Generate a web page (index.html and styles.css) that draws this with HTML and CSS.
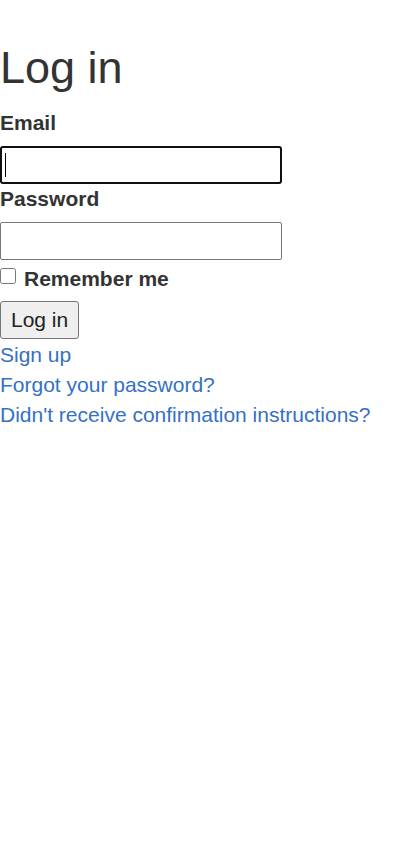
FILE: index.html
```html
<!DOCTYPE html>
<html lang="en">
<head>
<meta charset="utf-8">
<title>Log in</title>
<link rel="stylesheet" href="styles.css">
</head>
<body>
<main class="page">
  <h1 class="title">Log in</h1>
  <form class="form">
    <div class="field">
      <label class="label" for="email">Email</label>
      <span class="input-wrap is-focused"><input class="input input-focused" id="email" type="email"></span>
    </div>
    <div class="field">
      <label class="label" for="password">Password</label>
      <span class="input-wrap"><input class="input" id="password" type="password"></span>
    </div>
    <div class="remember">
      <input class="check" id="remember" type="checkbox">
      <label class="label-inline" for="remember">Remember me</label>
    </div>
    <div class="actions">
      <button class="btn" type="button">Log in</button>
    </div>
  </form>
  <nav class="links">
    <a class="link" href="#">Sign up</a>
    <a class="link" href="#">Forgot your password?</a>
    <a class="link" href="#">Didn't receive confirmation instructions?</a>
  </nav>
</main>
</body>
</html>
```
FILE: styles.css
```css
html, body {
  margin: 0;
  padding: 0;
  background: #fff;
}
body {
  font-family: "Liberation Sans", Arial, sans-serif;
  font-size: 21px;
  line-height: 30px;
  color: #333;
}
.page {
  display: flex;
  flex-direction: column;
}
.title {
  font-size: 45px;
  font-weight: 400;
  line-height: 49px;
  margin: 43px 0 16px;
}
.form {
  display: flex;
  flex-direction: column;
}
.field {
  display: flex;
  flex-direction: column;
  align-items: flex-start;
}
.label {
  display: block;
  font-weight: 700;
  line-height: 30px;
  margin-bottom: 8px;
}
.input-wrap {
  position: relative;
  display: block;
}
.input {
  display: block;
  box-sizing: border-box;
  width: 282px;
  height: 38px;
  margin: 0;
  padding: 0 6px;
  font: inherit;
  border: 1px solid #767676;
  border-radius: 2px;
  background: #fff;
  outline: none;
}
.input-focused {
  border: 2px solid #101010;
  border-radius: 3px;
}
.is-focused::after {
  content: "";
  position: absolute;
  left: 5px;
  top: 7px;
  width: 1px;
  height: 24px;
  background: #000;
}
.remember {
  display: flex;
  align-items: center;
  gap: 8px;
  margin-top: 4px;
  height: 30px;
}
.check {
  width: 16px;
  height: 16px;
  margin: 0;
  position: relative;
  top: -3px;
}
.label-inline {
  font-weight: 700;
}
.actions {
  display: flex;
  margin-top: 7px;
}
.btn {
  box-sizing: border-box;
  height: 38px;
  padding: 0 10px;
  font: inherit;
  line-height: 24px;
  color: #222;
  background: #efefef;
  border: 1px solid #767676;
  border-radius: 3px;
}
.links {
  display: flex;
  flex-direction: column;
  align-items: flex-start;
  margin-top: 1px;
}
.link {
  color: #3571c4;
  text-decoration: none;
  line-height: 30px;
}
```
